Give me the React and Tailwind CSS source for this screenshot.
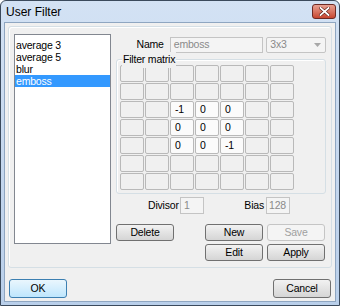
const items = ['average 3', 'average 5', 'blur', 'emboss']

const matrix = [
  ['', '', '', '', '', '', ''],
  ['', '', '', '', '', '', ''],
  ['', '', '-1', '0', '0', '', ''],
  ['', '', '0', '0', '0', '', ''],
  ['', '', '0', '0', '-1', '', ''],
  ['', '', '', '', '', '', ''],
  ['', '', '', '', '', '', ''],
]

const Button = ({ label, className = '', disabled, primary }) => (
  <div
    className={`flex h-[17px] items-center justify-center rounded-[3px] border ${
      disabled
        ? 'border-[#c5c5c5] bg-[#f4f4f4] text-[#a0a0a0]'
        : primary
        ? 'border-[#3c7fb1] bg-gradient-to-b from-[#eaf6fd] to-[#bee6fd] text-black'
        : 'border-[#707070] bg-gradient-to-b from-[#f2f2f2] to-[#d5d5d5] text-black'
    } ${className}`}
  >
    {label}
  </div>
)

const Cell = ({ value }) => (
  <div
    className={`flex h-[17px] w-[24px] items-center rounded-[2px] border border-[#b9b9b9] pl-[4px] leading-none ${
      value ? 'bg-[#fbfbfb]' : 'bg-[#f0f0f0]'
    }`}
  >
    {value}
  </div>
)

export default function App() {
  return (
    <div
      className="flex h-[306px] w-[340px] flex-col overflow-hidden rounded-t-[6px] border border-[#3b4a5c] bg-gradient-to-b from-[#d3e2f4] to-[#b9cfea] text-[10.5px] tracking-[-0.2px] text-black"
      style={{ fontFamily: '"Liberation Sans", Arial, sans-serif' }}
    >
      <div className="flex h-[21px] shrink-0 items-center justify-between pl-[5px] pr-[3px]">
        <span className="text-[12px] tracking-normal">User Filter</span>
        <div className="flex h-[15px] w-[24px] items-center justify-center rounded-[3px] border border-[#6d2a24] bg-gradient-to-b from-[#e8a193] to-[#c7452f]">
          <svg width="11" height="9" viewBox="0 0 11 9">
            <path d="M1.5 1 L9.5 8 M9.5 1 L1.5 8" stroke="#5a1a12" strokeWidth="3" strokeLinecap="square" />
            <path d="M1.5 1 L9.5 8 M9.5 1 L1.5 8" stroke="#fff" strokeWidth="1.8" strokeLinecap="square" />
          </svg>
        </div>
      </div>
      <div className="mx-[3px] mb-[3px] flex flex-1 flex-col border border-[#8fa6c1] bg-[#f0f0f0] px-[3px] pt-[3px]">
        <div className="flex h-[242px] rounded-[3px] border border-[#d5dfe5] pl-[5px] pt-[7px] shadow-[inset_1px_1px_0_#fff]">
          <div className="h-[210px] w-[97px] border border-[#828790] bg-white pt-[4px] leading-[12px]">
            {items.map((it) => (
              <div
                key={it}
                className={`h-[12px] pl-[1px] ${it === 'emboss' ? 'bg-[#3399ff] text-white' : ''}`}
              >
                {it}
              </div>
            ))}
          </div>
          <div className="ml-[5px] flex w-[210px] flex-col">
            <div className="mt-[3px] flex h-[16px] items-center">
              <span className="w-[48px] text-right">Name</span>
              <div className="ml-[6px] flex h-[16px] w-[94px] items-center border border-[#c4c4c4] bg-[#f4f4f4] pl-[3px] text-[#8a8a8a]">
                emboss
              </div>
              <div className="ml-[3px] flex h-[16px] w-[60px] items-center justify-between rounded-[2px] border border-[#c4c4c4] bg-[#f4f4f4] pl-[3px] pr-[4px] text-[#8a8a8a]">
                3x3
                <svg width="7" height="4" viewBox="0 0 7 4">
                  <path d="M0 0 H7 L3.5 4 Z" fill="#a8a8a8" />
                </svg>
              </div>
            </div>
            <div className="relative mt-[6px] h-[135px] w-[210px] rounded-[3px] border border-[#d5dfe5] shadow-[inset_1px_1px_0_#fff]">
              <span className="absolute left-[5px] top-[-8px] bg-[#f0f0f0] px-[1px]">Filter matrix</span>
              <div className="mt-[5px] ml-[3px] flex flex-col gap-[1px]">
                {matrix.map((row, r) => (
                  <div key={r} className="flex gap-[1px]">
                    {row.map((v, c) => (
                      <Cell key={c} value={v} />
                    ))}
                  </div>
                ))}
              </div>
            </div>
            <div className="mt-[3px] flex h-[17px] items-center">
              <span className="ml-[32px] w-[30px] whitespace-nowrap text-right">Divisor</span>
              <div className="ml-[2px] flex h-[17px] w-[24px] items-center border border-[#c4c4c4] bg-[#f4f4f4] pl-[3px] text-[#8a8a8a]">
                1
              </div>
              <span className="ml-[40px] w-[20px] whitespace-nowrap text-right">Bias</span>
              <div className="ml-[2px] flex h-[17px] w-[24px] items-center border border-[#c4c4c4] bg-[#f4f4f4] pl-[2px] text-[#8a8a8a]">
                128
              </div>
            </div>
            <div className="mt-[10px] flex">
              <Button label="Delete" className="w-[58px]" />
              <div className="ml-[31px] flex flex-col gap-[3px]">
                <div className="flex gap-[4px]">
                  <Button label="New" className="w-[58px]" />
                  <Button label="Save" className="w-[58px]" disabled />
                </div>
                <div className="flex gap-[4px]">
                  <Button label="Edit" className="w-[58px]" />
                  <Button label="Apply" className="w-[58px]" />
                </div>
              </div>
            </div>
          </div>
        </div>
        <div className="mt-[11px] flex justify-between px-[1px]">
          <Button label="OK" className="h-[19px] w-[58px]" primary />
          <Button label="Cancel" className="h-[19px] w-[58px]" />
        </div>
      </div>
    </div>
  )
}
